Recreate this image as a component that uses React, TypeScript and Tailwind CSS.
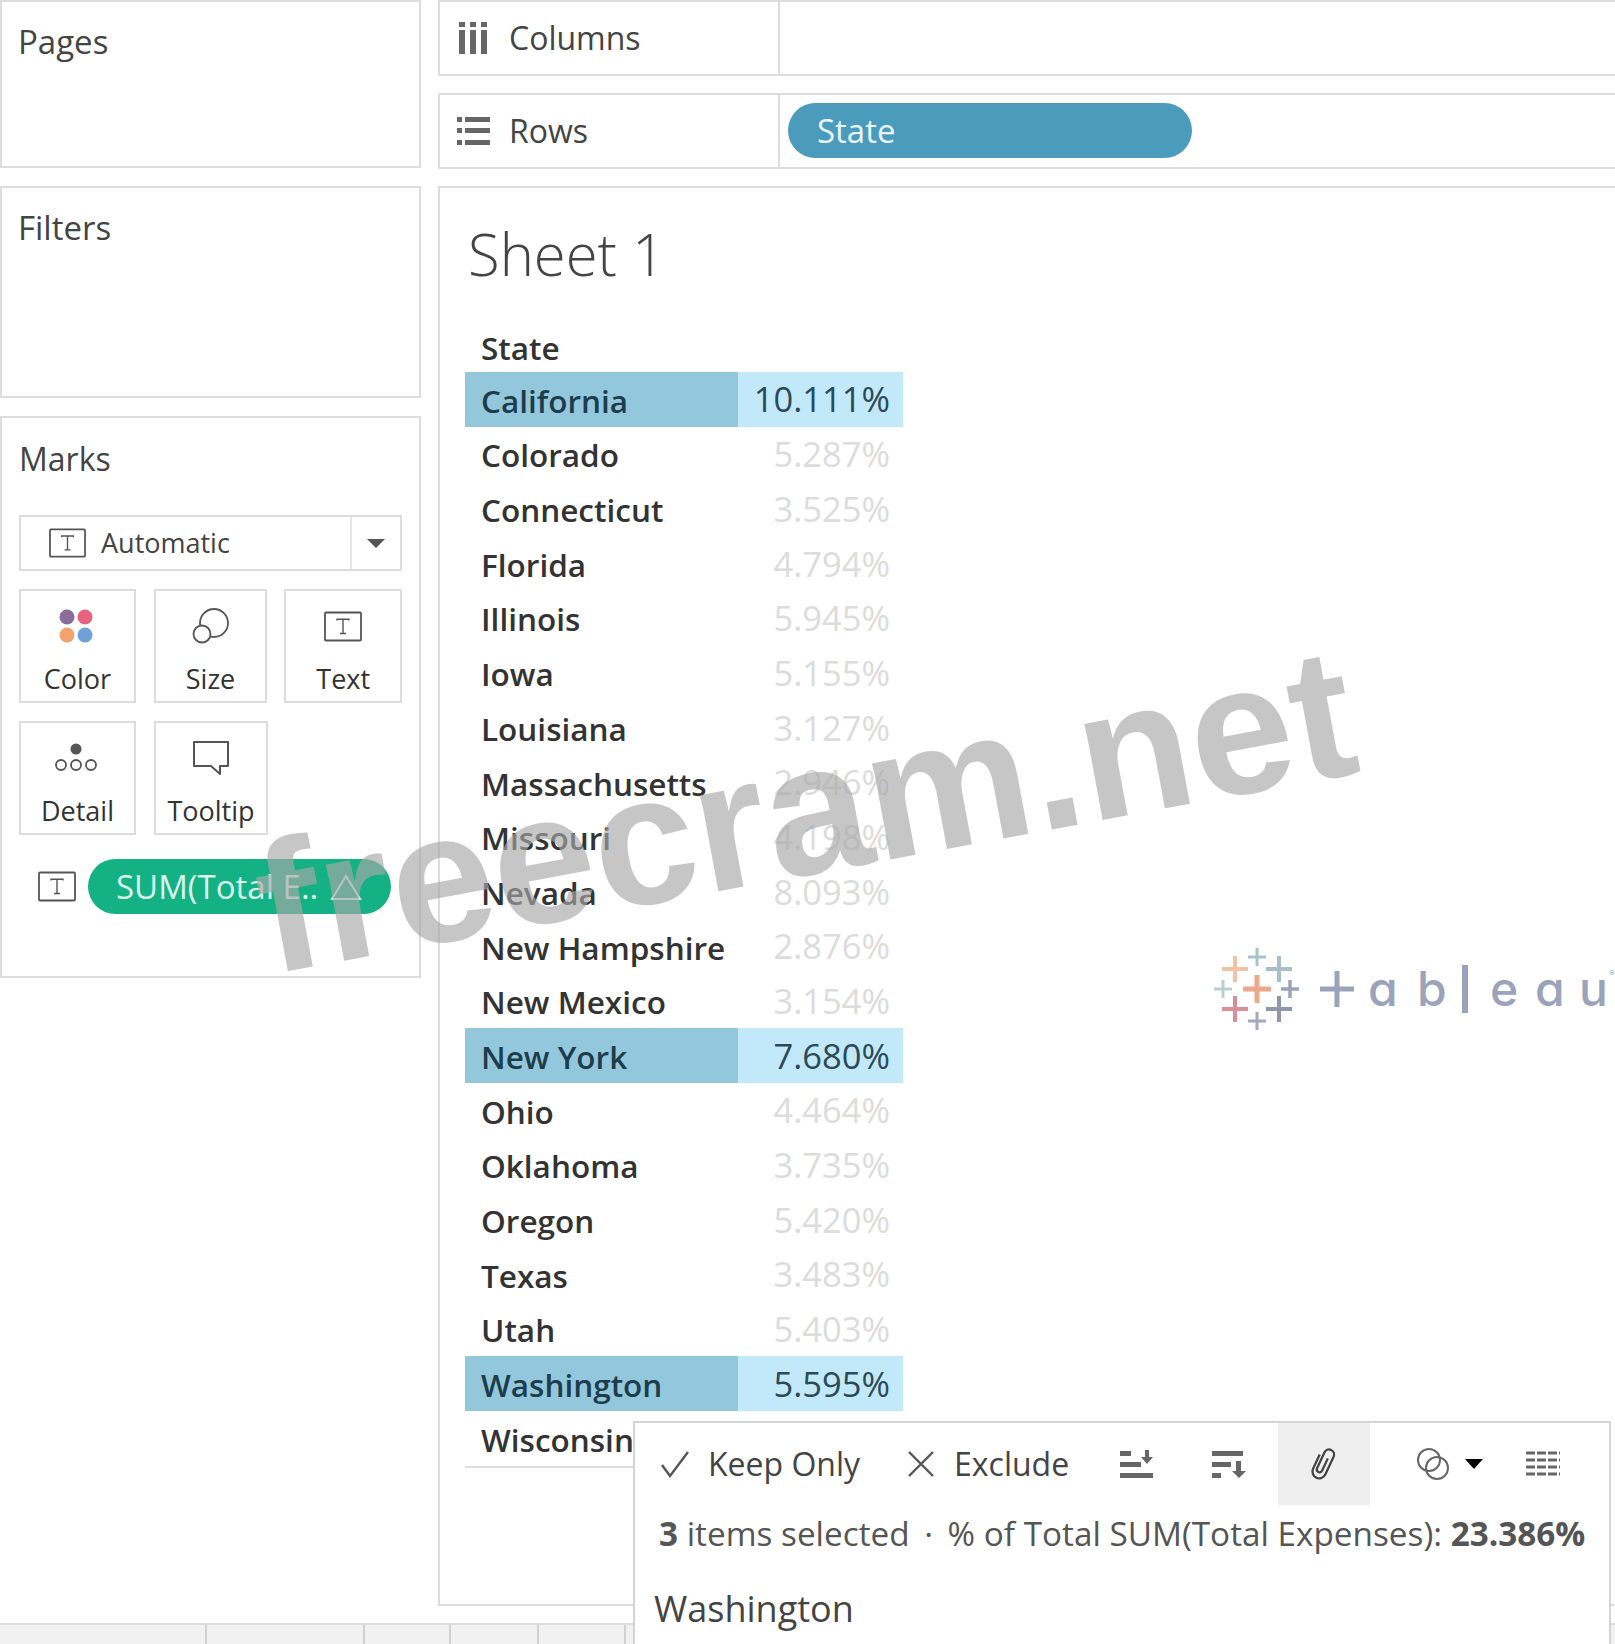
import React from "react";

const rows: [string, string, boolean?][] = [
  ["California", "10.111%", true],
  ["Colorado", "5.287%"],
  ["Connecticut", "3.525%"],
  ["Florida", "4.794%"],
  ["Illinois", "5.945%"],
  ["Iowa", "5.155%"],
  ["Louisiana", "3.127%"],
  ["Massachusetts", "2.946%"],
  ["Missouri", "4.198%"],
  ["Nevada", "8.093%"],
  ["New Hampshire", "2.876%"],
  ["New Mexico", "3.154%"],
  ["New York", "7.680%", true],
  ["Ohio", "4.464%"],
  ["Oklahoma", "3.735%"],
  ["Oregon", "5.420%"],
  ["Texas", "3.483%"],
  ["Utah", "5.403%"],
  ["Washington", "5.595%", true],
  ["Wisconsin", "4.080%"],
];

const TIcon = ({ className = "" }: { className?: string }) => (
  <svg viewBox="0 0 38 30" className={className} fill="none">
    <rect x="1" y="1" width="36" height="28" stroke="#555" strokeWidth="1.8" rx="1" />
    <path d="M13 9V7.800h12V9M19 8v14M16 22h6" stroke="#555" strokeWidth="1.4" />
  </svg>
);

const Card = ({ label, className, children }: { label: string; className: string; children: React.ReactNode }) => (
  <div className={`border-2 border-[#dcdcdc] flex flex-col items-center ${className}`}>
    <div className="h-[64px] w-full flex items-center justify-center pt-[6px]">{children}</div>
    <div className="mt-[6px] text-[27px] leading-[36px] text-[#333] whitespace-nowrap">{label}</div>
  </div>
);

const plus = [
  { x: 45, y: 48, r: 13, c: "#eec4a4", w: 4 },
  { x: 67, y: 36, r: 9, c: "#a9c3ca", w: 3 },
  { x: 89, y: 48, r: 13, c: "#a9bec8", w: 4 },
  { x: 33, y: 68, r: 9, c: "#b7cfd1", w: 3 },
  { x: 67, y: 68, r: 14, c: "#eba98c", w: 5 },
  { x: 100, y: 68, r: 9, c: "#9aa4b8", w: 3.500 },
  { x: 45, y: 88, r: 13, c: "#d88f99", w: 4 },
  { x: 67, y: 100, r: 9, c: "#a4a7be", w: 3 },
  { x: 89, y: 88, r: 13, c: "#8e97ad", w: 4 },
];

export default function App() {
  return (
    <div className="relative w-[1615px] h-[1644px] overflow-hidden bg-white font-['Open_Sans',sans-serif] text-[#444]">
      <div className="flex h-[1623px] items-start">
        {/* left column */}
        <div className="w-[421px] shrink-0 flex flex-col gap-[18px]">
          <div className="h-[168px] border-2 border-[#dcdcdc] pl-[16px] pt-[18px] text-[33px] leading-[44px]">Pages</div>
          <div className="h-[212px] border-2 border-[#dcdcdc] pl-[16px] pt-[18px] text-[33px] leading-[44px]">Filters</div>
          <div className="h-[562px] border-2 border-[#dcdcdc] pl-[17px] pr-[17px] pt-[19px]">
            <div className="text-[32px] leading-[44px]">Marks</div>
            <div className="mt-[34px] h-[56px] border-2 border-[#dcdcdc] flex items-center">
              <TIcon className="ml-[28px] w-[37px] h-[30px]" />
              <span className="ml-[15px] text-[27px] flex-1">Automatic</span>
              <div className="w-[50px] h-full border-l-2 border-[#e6e6e6] flex items-center justify-center">
                <div className="w-0 h-0 border-x-[9px] border-x-transparent border-t-[9px] border-t-[#555]" />
              </div>
            </div>
            <div className="mt-[18px] flex">
              <Card label="Color" className="w-[117px] h-[114px]">
                <svg className="mr-[3px]" width="36" height="36" viewBox="0 0 36 36">
                  <circle cx="9" cy="9" r="7.500" fill="#8b6d9c" />
                  <circle cx="27" cy="9" r="7.500" fill="#e8637f" />
                  <circle cx="9" cy="27" r="7.500" fill="#f3a26d" />
                  <circle cx="27" cy="27" r="7.500" fill="#6fa1d8" />
                </svg>
              </Card>
              <Card label="Size" className="ml-[18px] w-[114px] h-[114px]">
                <svg width="38" height="38" viewBox="0 0 38 38" fill="none" stroke="#555" strokeWidth="1.800">
                  <circle cx="22" cy="16" r="14" />
                  <circle cx="10" cy="27" r="8.500" fill="#fff" />
                </svg>
              </Card>
              <Card label="Text" className="ml-[17px] w-[118px] h-[114px]">
                <TIcon className="w-[38px] h-[31px]" />
              </Card>
            </div>
            <div className="mt-[18px] flex">
              <Card label="Detail" className="w-[117px] h-[114px]">
                <svg className="mr-[3px]" width="44" height="32" viewBox="0 0 44 32" fill="none" stroke="#555" strokeWidth="1.800">
                  <circle cx="22" cy="7" r="5.500" fill="#555" stroke="none" />
                  <circle cx="7" cy="23" r="5" />
                  <circle cx="22" cy="23" r="5" />
                  <circle cx="37" cy="23" r="5" />
                </svg>
              </Card>
              <Card label="Tooltip" className="ml-[18px] w-[114px] h-[114px]">
                <svg width="40" height="38" viewBox="0 0 40 38" fill="none" stroke="#555" strokeWidth="2">
                  <path d="M3 3h34v24h-8v8l-9-8H3z" strokeLinejoin="round" />
                </svg>
              </Card>
            </div>
            <div className="mt-[24px] flex items-center">
              <TIcon className="ml-[19px] w-[38px] h-[31px]" />
              <div className="ml-[12px] w-[303px] h-[55px] rounded-full bg-[#14b184] text-[#d9f5ec] flex items-center pl-[28px] text-[33px] whitespace-nowrap">
                <span>SUM(Total E..</span>
                <svg className="ml-[12px]" width="32" height="28" viewBox="0 0 32 28" fill="none" stroke="#d9f5ec" strokeWidth="2">
                  <path d="M16 3 30 26H2z" />
                </svg>
              </div>
            </div>
          </div>
        </div>

        {/* right column */}
        <div className="ml-[17px] w-[1200px] shrink-0 flex flex-col">
          <div className="h-[76px] border-2 border-[#dcdcdc] flex">
            <div className="w-[340px] border-r-2 border-[#dcdcdc] flex items-center pl-[18px]">
              <svg width="30" height="32" viewBox="0 0 30 32" fill="#666">
                <rect x="1" y="0" width="6" height="5" />
                <rect x="1" y="8" width="6" height="24" />
                <rect x="12" y="0" width="6" height="5" />
                <rect x="12" y="8" width="6" height="24" />
                <rect x="23" y="0" width="6" height="5" />
                <rect x="23" y="8" width="6" height="24" />
              </svg>
              <span className="ml-[21px] text-[32px]">Columns</span>
            </div>
          </div>
          <div className="mt-[17px] h-[76px] border-2 border-[#dcdcdc] flex">
            <div className="w-[340px] border-r-2 border-[#dcdcdc] flex items-center pl-[17px]">
              <svg width="33" height="28" viewBox="0 0 33 28" fill="#666">
                <rect x="0" y="0" width="5" height="5" />
                <rect x="8" y="0" width="25" height="5" />
                <rect x="0" y="11" width="5" height="5" />
                <rect x="8" y="11" width="25" height="5" />
                <rect x="0" y="23" width="5" height="5" />
                <rect x="8" y="23" width="25" height="5" />
              </svg>
              <span className="ml-[19px] text-[32px]">Rows</span>
            </div>
            <div className="ml-[8px] mt-[8px] w-[404px] h-[55px] rounded-full bg-[#4b9bbd] text-[#eaf5fa] flex items-center pl-[29px] text-[33px]">State</div>
          </div>
          <div className="relative mt-[17px] h-[1420px] border-2 border-[#dcdcdc] pl-[25px]">
            <div className="pt-[29px] pl-[3px] text-[58px] leading-[74px] font-light text-[#444]">Sheet 1</div>
            <div className="mt-[29px] w-[438px] text-[31.500px] font-semibold text-[#333]">
              <div className="h-[52px] flex items-center pl-[16px] pt-[4px]">State</div>
              {rows.map(([name, val, sel]) => (
                <div key={name} className="h-[54.7px] flex items-stretch whitespace-nowrap">
                  <div className={`w-[273px] flex items-center pl-[16px] pt-[2px] ${sel ? "bg-[#93c8dc] text-[#1e3d4c]" : ""}`}>{name}</div>
                  <div className={`flex-1 flex items-center justify-end pr-[13px] font-normal text-[34.500px] ${sel ? "bg-[#c2e9f9] text-[#2c4a58]" : "text-[#dcdcdc]"}`}>{val}</div>
                </div>
              ))}
              <div className="border-t-2 border-[#dcdcdc]" />
            </div>

            {/* tableau logo */}
            <div className="absolute left-[750px] top-[733px] flex items-center text-[#9aa3b9]">
              <svg width="132" height="136" viewBox="0 0 132 136" className="absolute left-[0px] top-[0px]">
                {plus.map((p, i) => (
                  <path key={i} d={`M${p.x - p.r} ${p.y}H${p.x + p.r}M${p.x} ${p.y - p.r}V${p.y + p.r}`} stroke={p.c} strokeWidth={p.w} fill="none" />
                ))}
              </svg>
              <div className="ml-[130px] h-[136px] flex items-center text-[48px] font-medium font-['Inter',sans-serif] [font-feature-settings:'cv11'] leading-none">
                <svg width="36" height="38" viewBox="0 0 36 38" fill="none" stroke="#9aa3b9" strokeWidth="5">
                  <path d="M0 19H34M17 1V37" />
                </svg>
                <span className="ml-[12px] w-[49px]">a</span>
                <span className="w-[37px]">b</span>
                <span className="w-[36px] pl-[8px]">
                  <svg width="6" height="48" viewBox="0 0 6 48"><rect width="6" height="48" fill="#9aa3b9" /></svg>
                </span>
                <span className="w-[45px]">e</span>
                <span className="w-[44px]">a</span>
                <span>u</span>
                <span className="text-[8px] self-start mt-[48px] ml-[1px]">®</span>
              </div>
            </div>
          </div>
        </div>
      </div>

      {/* bottom bar */}
      <div className="h-[21px] bg-[#f1f1f1] border-t-2 border-[#dcdcdc] flex">
        <div className="w-[207px] border-r-2 border-[#d0d0d0]" />
        <div className="w-[158px] border-r-2 border-[#d0d0d0]" />
        <div className="w-[86px] border-r-2 border-[#d0d0d0]" />
        <div className="w-[88px] border-r-2 border-[#d0d0d0]" />
        <div className="w-[87px] border-r-2 border-[#d0d0d0]" />
      </div>

      {/* floating tooltip */}
      <div className="absolute left-[633px] top-[1421px] w-[978px] h-[240px] bg-white border-2 border-[#d4d4d4] text-[#444]">
        <div className="h-[82px] flex items-center text-[32px] whitespace-nowrap">
          <svg className="ml-[25px] shrink-0" width="30" height="30" viewBox="0 0 30 30" fill="none" stroke="#555" strokeWidth="2.400">
            <path d="M2 16l8 11L28 3" />
          </svg>
          <span className="ml-[18px]">Keep Only</span>
          <svg className="ml-[47px] shrink-0" width="28" height="28" viewBox="0 0 28 28" fill="none" stroke="#555" strokeWidth="2.400">
            <path d="M2 2l24 24M26 2 2 26" />
          </svg>
          <span className="ml-[19px]">Exclude</span>
          <svg className="ml-[51px] shrink-0" width="36" height="28" viewBox="0 0 36 28" fill="#666">
            <rect x="0" y="1" width="11" height="5" />
            <rect x="0" y="12" width="21" height="5" />
            <rect x="0" y="23" width="33" height="5" />
            <path d="M25 0h4v7h4l-6 7-6-7h4z" />
          </svg>
          <svg className="ml-[56px] shrink-0" width="36" height="28" viewBox="0 0 36 28" fill="#666">
            <rect x="0" y="1" width="31" height="5" />
            <rect x="0" y="12" width="19" height="5" />
            <rect x="0" y="23" width="9" height="5" />
            <path d="M24 11h5v10h5l-7 7-7-7h4z" />
          </svg>
          <div className="ml-[30px] w-[92px] h-[82px] shrink-0 bg-[#efefef] flex items-center justify-center">
            <svg width="36" height="36" viewBox="0 0 32 32" fill="none" stroke="#444" strokeWidth="2" className="rotate-[25deg]">
              <path d="M17 10V22a2.500 2.500 0 0 1-5 0V6.500a4.500 4.500 0 0 1 9 0V24a6 6 0 0 1-12 0V10" />
            </svg>
          </div>
          <svg className="ml-[46px] shrink-0" width="34" height="34" viewBox="0 0 34 34" fill="none" stroke="#666" strokeWidth="2">
            <circle cx="13" cy="13" r="11" />
            <circle cx="21" cy="21" r="11" />
          </svg>
          <div className="ml-[15px] shrink-0 w-0 h-0 border-x-[9px] border-x-transparent border-t-[10px] border-t-black" />
          <svg className="ml-[43px] shrink-0" width="34" height="26" viewBox="0 0 34 26" stroke="#666" strokeWidth="3" strokeDasharray="9 2">
            <path d="M0 2H34M0 9H34M0 16H34M0 23H34" />
          </svg>
        </div>
        <div className="pl-[24px] text-[33.300px] leading-[44px] whitespace-nowrap text-[#555] mt-[6px]">
          <span className="font-bold">3</span> items selected <span className="mx-[6px]">·</span> % of Total SUM(Total Expenses): <span className="font-bold">23.386%</span>
        </div>
        <div className="pl-[19px] mt-[32px] text-[36px] leading-[44px] text-[#444]">Washington</div>
      </div>

      {/* watermark */}
      <div className="absolute left-[250px] top-[718px] rotate-[-10.500deg] font-['Liberation_Sans',sans-serif] font-bold text-[185px] leading-none whitespace-nowrap text-[#a8a8a8]/65 pointer-events-none">
        freecram.net
      </div>
    </div>
  );
}
